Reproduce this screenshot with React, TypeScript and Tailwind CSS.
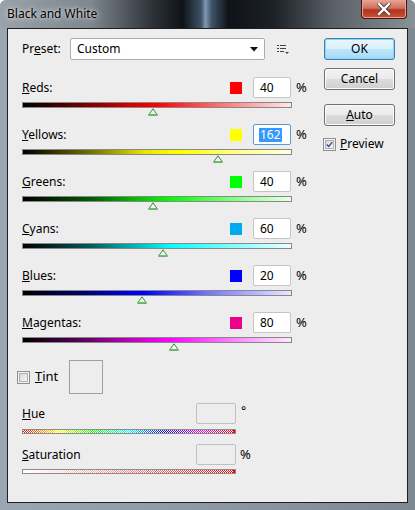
import React from 'react';

interface Channel {
    key: string;
    rest: string;
    value: number;
    swatch: string;
    grad: string;
    focused?: boolean;
}

const channels: Channel[] = [
    { key: 'R', rest: 'eds:', value: 40, swatch: 'bg-[#ff0000]', grad: 'bg-[linear-gradient(to_right,#000_0%,#700000_22%,#d40000_40%,#ff0000_50%,#ff6a6a_72%,#ffe8e8_100%)]' },
    { key: 'Y', rest: 'ellows:', value: 162, swatch: 'bg-[#ffff00]', grad: 'bg-[linear-gradient(to_right,#000_0%,#6e6e00_25%,#e4e400_45%,#ffff00_58%,#ffff80_78%,#ffffe8_100%)]', focused: true },
    { key: 'G', rest: 'reens:', value: 40, swatch: 'bg-[#00ff00]', grad: 'bg-[linear-gradient(to_right,#000_0%,#005a00_25%,#00c000_42%,#00ff00_55%,#80ff80_78%,#eaffea_100%)]' },
    { key: 'C', rest: 'yans:', value: 60, swatch: 'bg-[#00aaee]', grad: 'bg-[linear-gradient(to_right,#000_0%,#005a5a_25%,#00c8c8_45%,#00ffff_55%,#80ffff_78%,#eaffff_100%)]' },
    { key: 'B', rest: 'lues:', value: 20, swatch: 'bg-[#0000ff]', grad: 'bg-[linear-gradient(to_right,#000_0%,#000070_22%,#0000e0_38%,#0000ff_45%,#7070ff_68%,#e8e8ff_100%)]' },
    { key: 'M', rest: 'agentas:', value: 80, swatch: 'bg-[#ee0088]', grad: 'bg-[linear-gradient(to_right,#000_0%,#5a005a_22%,#c800c8_42%,#ff00ff_55%,#ff80ff_78%,#ffeaff_100%)]' },
];

// slider range -200..300
const thumbLeft = (v: number) => ((v + 200) / 500) * 270;

function Thumb() {
    return (
        <svg width="11" height="8" viewBox="0 0 11 8">
            <polygon points="5.5,0.8 10,7.2 1,7.2" fill="#eef6ee" stroke="#3d8f3d" strokeWidth="1" />
            <line x1="2" y1="6.5" x2="9" y2="6.5" stroke="#6fbf6f" strokeWidth="1" />
        </svg>
    );
}

// checkered (disabled-look) gradient strip used for hue / saturation
function CheckerBar({ id, stops }: { id: string; stops: string[] }) {
    return (
        <div className="w-[214px] h-[5px] border border-[#8c8c8c] bg-white">
            <svg width="212" height="3" className="block">
                <defs>
                    <linearGradient id={`${id}-g`} x1="0" x2="1" y1="0" y2="0">
                        {stops.map((s, i) => (
                            <stop key={i} offset={i / (stops.length - 1)} stopColor={s} />
                        ))}
                    </linearGradient>
                    <pattern id={`${id}-p`} width="2" height="2" patternUnits="userSpaceOnUse">
                        <rect x="0" y="0" width="1" height="1" fill="#fff" />
                        <rect x="1" y="1" width="1" height="1" fill="#fff" />
                    </pattern>
                </defs>
                <rect width="212" height="3" fill={`url(#${id}-g)`} />
                <rect width="212" height="3" fill={`url(#${id}-p)`} />
                <rect x="210" width="2" height="3" fill="#ff0000" />
            </svg>
        </div>
    );
}

function Checkbox({ checked }: { checked?: boolean }) {
    return (
        <div className="w-[13px] h-[13px] border border-[#8e8f8f] bg-[#f4f4f4] p-[1px] shrink-0">
            <div className="w-full h-full border border-[#aeb0b3] bg-[linear-gradient(135deg,#d5d7d9,#f7f7f7)] flex items-center justify-center">
                {checked && (
                    <svg width="9" height="9" viewBox="0 0 9 9">
                        <path d="M1 4.5 L3.5 7 L8 1.5" fill="none" stroke="#3a4f8c" strokeWidth="1.8" />
                    </svg>
                )}
            </div>
        </div>
    );
}

function Button({ children, primary }: { children: React.ReactNode; primary?: boolean }) {
    return (
        <div
            className={`w-[71px] h-[22px] rounded-[3px] border flex items-center justify-center text-[12px] ${primary
                ? 'border-[#3c7fb1] shadow-[inset_0_0_0_1px_#8fd3f5] bg-[linear-gradient(to_bottom,#eaf6fd_0%,#d9f0fc_50%,#bee6fd_50%,#a7d9f5_100%)]'
                : 'border-[#707070] shadow-[inset_0_0_0_1px_#fbfbfb] bg-[linear-gradient(to_bottom,#f2f2f2_0%,#ebebeb_50%,#dddddd_50%,#cfcfcf_100%)]'
                }`}
        >
            {children}
        </div>
    );
}

export default function App() {
    return (
        <div className="w-[415px] h-[510px] flex flex-col rounded-t-[6px] bg-[linear-gradient(to_right,#9aa6b2,#8c98a4_50%,#7d8893)] font-['Noto_Sans',sans-serif] text-[12px] text-black overflow-hidden">
            {/* title bar */}
            <div className="h-[28px] shrink-0 flex items-start justify-between bg-[linear-gradient(to_right,#9ba2a9_0%,#7e868e_22%,#2c3137_37%,#0f1317_44%,#3e5368_48.5%,#7f98b2_49.5%,#3e5368_51%,#0f1317_55%,#1c2126_66%,#585f66_80%,#8a9197_100%)]">
                <div className="pl-[7px] pt-[5px] text-[12px] [text-shadow:0_0_6px_#d8dde2,0_0_3px_#d8dde2]">Black and White</div>
                <div className="mr-[8px] w-[46px] h-[19px] rounded-b-[4px] border border-t-0 border-[#4a1410] bg-[linear-gradient(to_bottom,#e6a396_0%,#d0705f_45%,#b7321c_55%,#c6533b_100%)] shadow-[inset_0_0_0_1px_#e8a394] flex items-center justify-center">
                    <svg width="14" height="12" viewBox="0 0 14 12">
                        <path d="M2 1 L12 11 M12 1 L2 11" stroke="#3a3a3a" strokeWidth="4" strokeLinecap="square" />
                        <path d="M2 1 L12 11 M12 1 L2 11" stroke="#ffffff" strokeWidth="2.4" strokeLinecap="square" />
                    </svg>
                </div>
            </div>

            {/* client area */}
            <div className="mx-[7px] mb-[7px] flex-1 border border-[#1c2024] bg-[#ededed] flex pl-[14px] pt-[9px]">
                {/* left column */}
                <div className="w-[302px] flex flex-col">
                    <div className="flex items-center h-[22px]">
                        <span className="w-[48px]">
                            Pr<u>e</u>set:
                        </span>
                        <div className="w-[195px] h-[22px] border border-[#acacac] rounded-[2px] bg-white flex items-center justify-between pl-[6px] pr-[6px]">
                            <span>Custom</span>
                            <svg width="8" height="5" viewBox="0 0 8 5">
                                <polygon points="0,0 8,0 4,4.5" fill="#111" />
                            </svg>
                        </div>
                        <svg className="ml-[12px]" width="12" height="11" viewBox="0 0 12 11">
                            <rect x="0" y="1" width="2" height="1" fill="#444" />
                            <rect x="3" y="1" width="6" height="1" fill="#444" />
                            <rect x="0" y="4" width="2" height="1" fill="#444" />
                            <rect x="3" y="4" width="6" height="1" fill="#444" />
                            <rect x="0" y="7" width="2" height="1" fill="#444" />
                            <rect x="3" y="7" width="4" height="1" fill="#444" />
                            <polygon points="8,8 12,8 10,10" fill="#444" />
                        </svg>
                    </div>

                    <div className="mt-[17px] flex flex-col">
                        {channels.map((c) => (
                            <div key={c.key} className="flex flex-col mb-[16px]">
                                <div className="flex items-center h-[21px]">
                                    <span className="w-[208px]">
                                        <u>{c.key}</u>
                                        {c.rest}
                                    </span>
                                    <div className={`w-[12px] h-[12px] ${c.swatch}`} />
                                    <div
                                        className={`ml-[11px] w-[38px] h-[21px] border rounded-[2px] bg-white flex items-center pl-[6px] ${c.focused ? 'border-[#5b9bd5]' : 'border-[#c5c5c5]'
                                            }`}
                                    >
                                        {c.focused ? (
                                            <span className="bg-[#3399ff] text-white leading-[14px] px-[1px] -ml-[1px]">{c.value}</span>
                                        ) : (
                                            <span>{c.value}</span>
                                        )}
                                    </div>
                                    <span className="ml-[5px] text-[13px]">%</span>
                                </div>
                                <div className={`mt-[4px] w-[270px] h-[6px] border border-[#888] relative ${c.grad}`}>
                                    <div className="absolute top-[5px] -translate-x-1/2" style={{ left: thumbLeft(c.value) }}>
                                        <Thumb />
                                    </div>
                                </div>
                            </div>
                        ))}
                    </div>

                    {/* tint */}
                    <div className="flex items-center -ml-[5px] mt-[1px]">
                        <Checkbox />
                        <span className="ml-[5px] text-[13px]">
                            <u>T</u>int
                        </span>
                        <div className="ml-[11px] w-[34px] h-[34px] border border-[#a0a0a0]" />
                    </div>

                    <div className="mt-[9px] flex items-center h-[21px]">
                        <span className="w-[174px]">
                            <u>H</u>ue
                        </span>
                        <div className="w-[40px] h-[21px] border border-[#c0c0c0] rounded-[2px]" />
                        <span className="ml-[5px] self-start -mt-[1px] text-[12px]">°</span>
                    </div>
                    <div className="mt-[5px]">
                        <CheckerBar id="hue" stops={['#ff0000', '#ffff00', '#00ff00', '#00ffff', '#0000ff', '#ff00ff', '#ff0000']} />
                    </div>

                    <div className="mt-[10px] flex items-center h-[21px]">
                        <span className="w-[174px]">
                            <u>S</u>aturation
                        </span>
                        <div className="w-[40px] h-[21px] border border-[#c0c0c0] rounded-[2px]" />
                        <span className="ml-[4px] text-[13px]">%</span>
                    </div>
                    <div className="mt-[4px]">
                        <CheckerBar id="sat" stops={['#ffffff', '#ff0000']} />
                    </div>
                </div>

                {/* right column */}
                <div className="flex flex-col">
                    <Button primary>OK</Button>
                    <div className="mt-[8px]">
                        <Button>Cancel</Button>
                    </div>
                    <div className="mt-[14px]">
                        <Button>
                            <span>
                                <u>A</u>uto
                            </span>
                        </Button>
                    </div>
                    <div className="mt-[9px] -ml-[1px] flex items-center">
                        <Checkbox checked />
                        <span className="ml-[4px]">
                            <u>P</u>review
                        </span>
                    </div>
                </div>
            </div>
        </div>
    );
}
